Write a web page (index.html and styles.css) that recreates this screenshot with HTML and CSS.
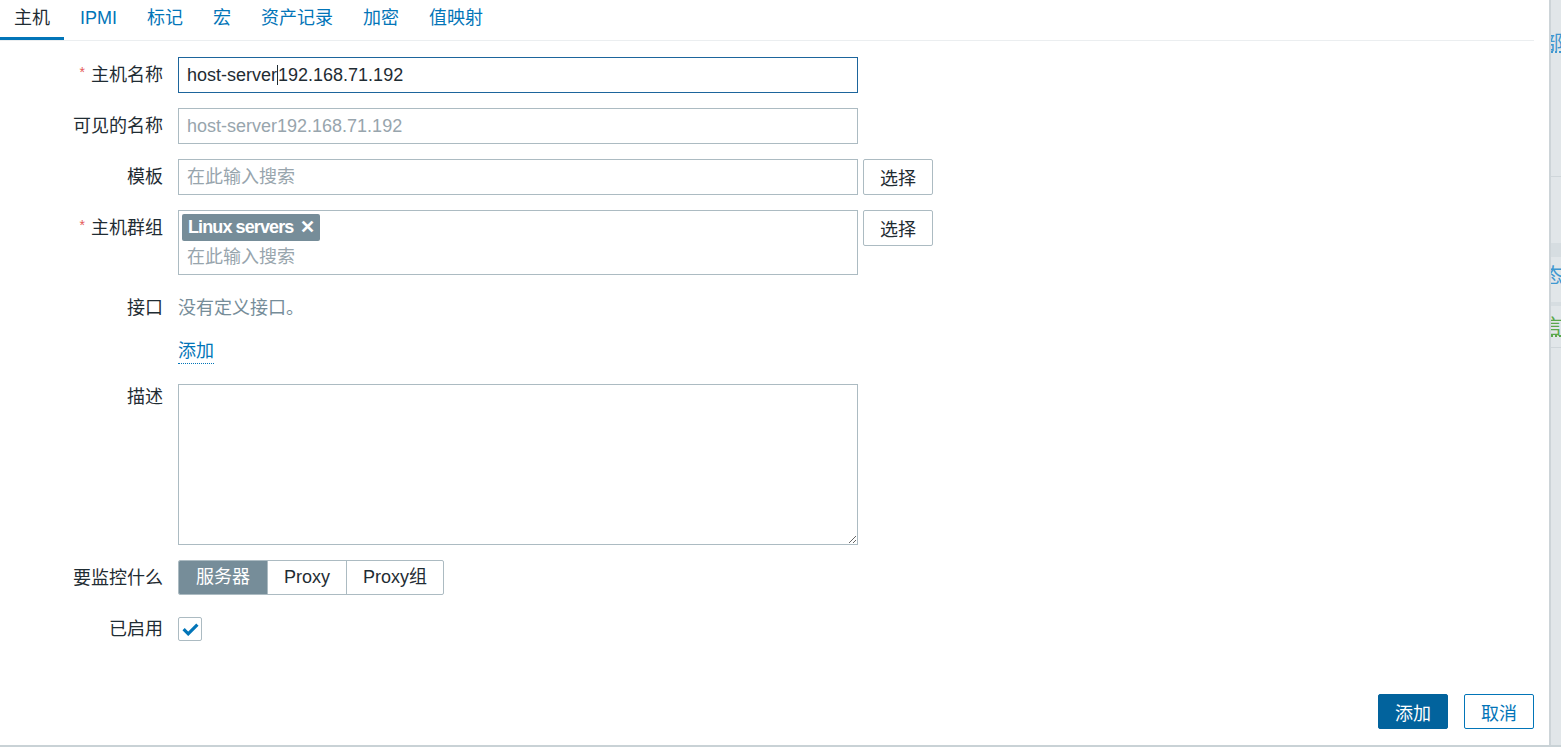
FILE: index.html
```html
<!DOCTYPE html>
<html lang="zh-CN">
<head>
<meta charset="utf-8">
<title>主机</title>
<link rel="stylesheet" href="styles.css">
</head>
<body>
<div class="page">
  <div class="dialog">
    <div class="tabs">
      <span class="tab active">主机</span>
      <span class="tab">IPMI</span>
      <span class="tab">标记</span>
      <span class="tab">宏</span>
      <span class="tab">资产记录</span>
      <span class="tab">加密</span>
      <span class="tab">值映射</span>
    </div>
    <div class="form">
      <div class="row">
        <label class="lbl"><span class="req">*</span>主机名称</label>
        <div class="field"><div class="input focused">host-server<span class="caret"></span>192.168.71.192</div></div>
      </div>
      <div class="row">
        <label class="lbl">可见的名称</label>
        <div class="field"><div class="input placeholder">host-server192.168.71.192</div></div>
      </div>
      <div class="row">
        <label class="lbl">模板</label>
        <div class="field with-btn">
          <div class="input placeholder">在此输入搜索</div>
          <button class="btn-alt">选择</button>
        </div>
      </div>
      <div class="row">
        <label class="lbl"><span class="req">*</span>主机群组</label>
        <div class="field with-btn">
          <div class="multi">
            <span class="tag">Linux servers <span class="x">✕</span></span>
            <span class="ms-ph">在此输入搜索</span>
          </div>
          <button class="btn-alt">选择</button>
        </div>
      </div>
      <div class="row">
        <label class="lbl">接口</label>
        <div class="field"><span class="muted">没有定义接口。</span></div>
      </div>
      <div class="row link-row">
        <span class="lbl"></span>
        <div class="field"><a class="link">添加</a></div>
      </div>
      <div class="row">
        <label class="lbl">描述</label>
        <div class="field"><textarea class="ta"></textarea></div>
      </div>
      <div class="row">
        <label class="lbl">要监控什么</label>
        <div class="field">
          <div class="seg">
            <span class="seg-item on">服务器</span>
            <span class="seg-item">Proxy</span>
            <span class="seg-item">Proxy组</span>
          </div>
        </div>
      </div>
      <div class="row">
        <label class="lbl">已启用</label>
        <div class="field">
          <span class="cb"><svg width="17" height="13" viewBox="0 0 17 13"><path d="M1.6 6.2 L6.2 10.8 L15.4 1.6" fill="none" stroke="#0275b8" stroke-width="3.2"/></svg></span>
        </div>
      </div>
    </div>
    <div class="footer">
      <button class="btn-primary">添加</button>
      <button class="btn-outline">取消</button>
    </div>
  </div>
  <div class="behind">
    <div class="b-gap1"></div>
    <div class="b-text blue dotted">部</div>
    <div class="b-gap2"></div>
    <div class="b-line"></div>
    <div class="b-gap3"></div>
    <div class="b-band"></div>
    <div class="b-text2 blue">态</div>
    <div class="b-band2"></div>
    <div class="b-text3 green dotted">言</div>
    <div class="b-line2"></div>
  </div>
</div>
</body>
</html>
```

FILE: styles.css
```css
* { box-sizing: border-box; }
html, body { margin: 0; padding: 0; }
body {
  background: #c9d2d6;
  font-family: "Liberation Sans", Arial, "Noto Sans CJK SC", sans-serif;
  font-size: 18px;
  color: #1f2c33;
  width: 1561px;
  height: 747px;
  overflow: hidden;
}
.page { display: flex; height: 745px; }
.dialog {
  width: 1549px;
  height: 745px;
  background: #fff;
  display: flex;
  flex-direction: column;
  padding-right: 15px;
}
.tabs {
  display: flex;
  gap: 2px;
  border-bottom: 1px solid #ebeef0;
  height: 41px;
}
.tab {
  padding: 0 14px;
  line-height: 37px;
  height: 40px;
  color: #0275b8;
  border-bottom: 3px solid transparent;
}
.tab.active { color: #1f2c33; border-bottom-color: #0275b8; }

.form { flex: 1; padding-top: 16px; display: flex; flex-direction: column; gap: 15px; }
.row { display: flex; align-items: flex-start; }
.lbl {
  width: 163px;
  text-align: right;
  line-height: 36px;
  flex: none;
  margin-right: 15px;
  white-space: nowrap;
}
.req { color: #e45959; font-size: 14px; vertical-align: top; line-height: 30px; margin-right: 6px; }
.field { display: flex; align-items: flex-start; }
.with-btn { gap: 5px; }
.input {
  width: 680px;
  height: 36px;
  border: 1px solid #acbbc2;
  padding: 0 8px;
  line-height: 34px;
  white-space: nowrap;
}
.input.focused { border-color: #1d659c; }
.input.placeholder { color: #98a5ad; }
.caret { display: inline-block; width: 1px; height: 20px; background: #1f2c33; vertical-align: -4px; }
.btn-alt {
  width: 70px;
  height: 36px;
  background: #fff;
  border: 1px solid #acbbc2;
  border-radius: 2px;
  font: inherit;
  color: #1f2c33;
  padding: 0;
}
.multi {
  width: 680px;
  height: 65px;
  border: 1px solid #acbbc2;
  padding: 3px 3px 0 3px;
  display: flex;
  flex-direction: column;
  align-items: flex-start;
}
.tag {
  background: #768d99;
  color: #fff;
  border-radius: 2px;
  height: 27px;
  line-height: 27px;
  padding: 0 5px 0 6px;
  font-weight: bold;
  letter-spacing: -0.9px;
}
.tag .x { font-weight: bold; margin-left: 3px; letter-spacing: 0; }
.ms-ph { color: #98a5ad; padding-left: 5px; line-height: 33px; }
.muted { color: #768d99; line-height: 36px; }
.link-row { margin-top: -2px; }
.link {
  color: #0275b8;
  line-height: 24px;
  border-bottom: 1px dotted #0275b8;
  text-decoration: none;
}
.ta {
  width: 680px;
  height: 161px;
  border: 1px solid #acbbc2;
  margin: 0;
  margin-top: 5px;
  font: inherit;
  resize: both;
}
.seg {
  display: flex;
  border: 1px solid #acbbc2;
  border-radius: 2px;
  height: 35px;
  overflow: hidden;
}
.seg-item {
  line-height: 33px;
  padding: 0 16px;
  border-left: 1px solid #acbbc2;
}
.seg-item:first-child { border-left: none; }
.seg-item.on { background: #768d99; color: #fff; padding: 0 17px; }
.seg-item:nth-child(2) { width: 79px; text-align: center; padding: 0; }
.seg-item:nth-child(3) { width: 97px; text-align: center; padding: 0; }
.cb {
  display: flex;
  align-items: center;
  justify-content: center;
  width: 24px;
  height: 24px;
  border: 1px solid #acbbc2;
  border-radius: 2px;
  margin-top: 6px;
}
.footer {
  display: flex;
  justify-content: flex-end;
  gap: 16px;
  padding-bottom: 16px;
}
.btn-primary, .btn-outline {
  width: 70px;
  height: 35px;
  border-radius: 2px;
  font: inherit;
  padding: 0;
}
.btn-primary { background: #02639d; color: #fff; border: 1px solid #02639d; }
.btn-outline { background: #fff; color: #0275b8; border: 1px solid #0275b8; }

.behind {
  flex: 1;
  background: #e1e6e9;
  border-left: 2px solid #cdd4d8;
  overflow: hidden;
  display: flex;
  flex-direction: column;
  font-size: 20px;
}
.b-gap1 { height: 32px; }
.b-text, .b-text2, .b-text3 { white-space: nowrap; text-indent: -8px; line-height: 22px; }
.blue { color: #3e97d0; }
.green { color: #59a84b; }
.dotted { text-decoration: underline dotted; }
.b-gap2 { height: 122px; }
.b-line { height: 1px; background: #cfd6da; }
.b-gap3 { height: 66px; }
.b-band { height: 14px; background: #d6dde1; margin-bottom: 8px; }
.b-text2 { height: 37px; }
.b-band2 { height: 4px; background: #d6dde1; margin-bottom: 10px; }
.b-text3 { height: 31px; }
.b-line2 { height: 1px; background: #cfd6da; }
```
